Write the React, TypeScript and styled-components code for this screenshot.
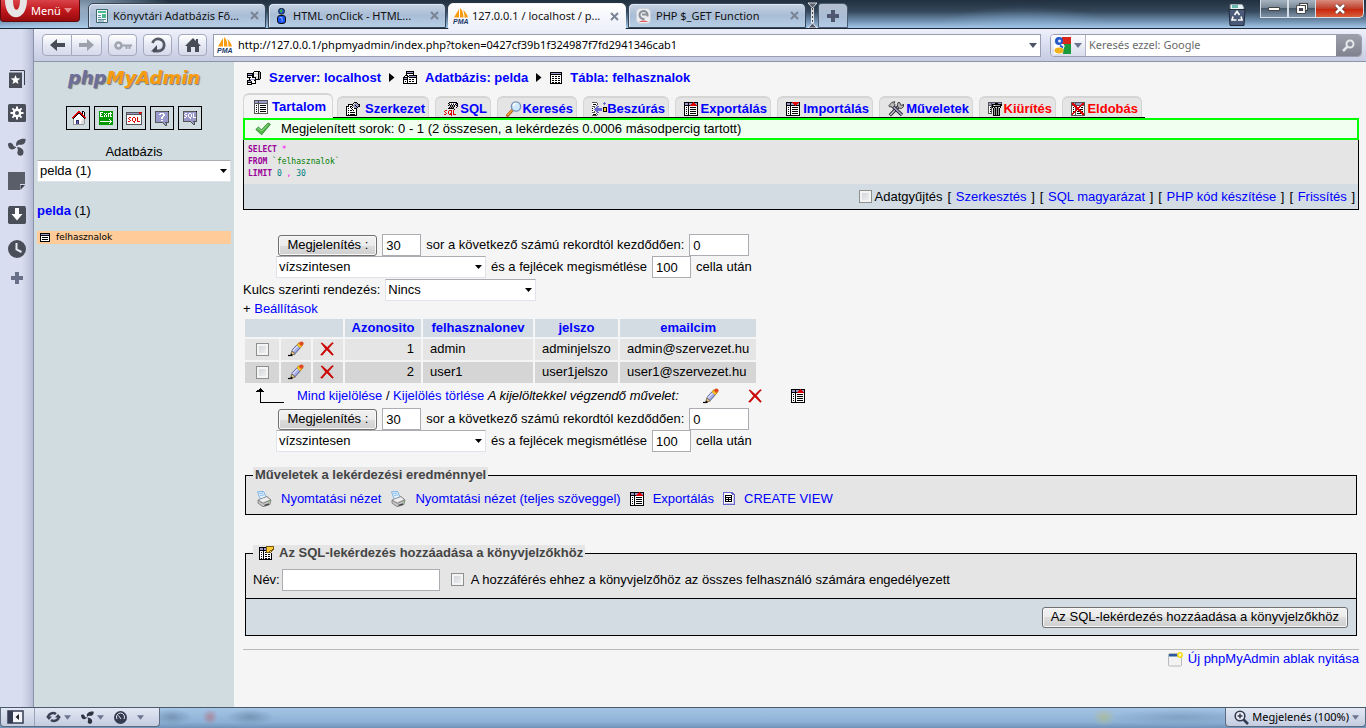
import React from "react";
import styled, { createGlobalStyle, css } from "styled-components";

const sans = '"Liberation Sans", Arial, sans-serif';
const ui = '"Noto Sans", "Segoe UI", sans-serif';
const arrowDown =
  "url(\"data:image/svg+xml,%3Csvg xmlns='http://www.w3.org/2000/svg' width='7' height='4'%3E%3Cpath d='M0 0h7L3.5 4z' fill='%23000'/%3E%3C/svg%3E\")";

const GlobalStyle = createGlobalStyle`
  *, *::before, *::after { box-sizing: border-box; }
  body { margin: 0; background: #f5f5f5; color: #000; font: 13px/16px ${sans}; }
  svg { display: block; flex: none; }
  a { color: #00f; text-decoration: none; }
  button, input, select { font: inherit; color: inherit; margin: 0; }
`;

/* ---------- icons ---------- */

const palette: Record<string, string> = {
  k: "#000", w: "#fff", b: "#9999cc", g: "#999", G: "#555", r: "#d00", l: "#ddd",
  y: "#fc3", o: "#f90", n: "#009900", d: "#336", s: "#c8c8e8", p: "#6666cc", q: "#e04040", u: "#7a5a10",
};

function Pixels({ rows, size }: { rows: string[]; size?: number }) {
  const w = Math.max(...rows.map((r) => r.length));
  const h = rows.length;
  const rects: React.ReactNode[] = [];
  rows.forEach((row, y) => {
    let x = 0;
    while (x < row.length) {
      const c = row[x];
      let end = x + 1;
      while (end < row.length && row[end] === c) end++;
      if (palette[c]) rects.push(<rect key={`${x}-${y}`} x={x} y={y} width={end - x} height={1} fill={palette[c]} />);
      x = end;
    }
  });
  return (
    <svg width={size ?? w} height={size ?? h} viewBox={`0 0 ${w} ${h}`} shapeRendering="crispEdges" aria-hidden="true">
      {rects}
    </svg>
  );
}

const art = {
  browse: [
    "GGGGGGGGGGGGGG", "GbbbGbbbbbbbbG", "GbbbGbbbbbbbbG", "GGGGGGGGGGGGGG", "GwwwGwwwwwwwwG", "GwkwGwkkkkkkwG", "GwwwGwwwwwwwwG",
    "GwkwGwkkkkkkwG", "GwwwGwwwwwwwwG", "GwkwGwkkkkkkwG", "GwwwGwwwwwwwwG", "GwkwGwkkkkkkwG", "GwwwGwwwwwwwwG", "GGGGGGGGGGGGGG",
  ],
  props: [
    "........kkk...", ".......kwgbk..", "..kkkkkwgbbbkk", "..kwwwkgbkbbbk", "kkkwkkwbbbkbkk", "kwwwkwkwbbbk..", "kwkwwkwwkkk...",
    "kwwwwwkwwwk...", "kwkwkkwkwwk...", "kwwwwwwwwwk...", "kwkwkkkkkwk...", "kwwwwwwwwwk...", "kwkwkkkkkwk...", "kkkkkkkkkkk...",
  ],
  sql: [
    ".....kkkkkkkk..", "....kgwgwgwbkk.", ".....kwkwkwkbk.", "....kgkgkgk.kk.", "......kgkgk..k.", ".....kgkgk..k..", "....kkkkkk.....",
    "..........k....", ".rr..rrr.r.....", "r...r..r.r.....", ".r..r..r.r.....", "..r.r.rr.r.....", "rr...rrr.rrr...", ".......r.......",
  ],
  export: [
    "kkkkkkkkkrkkkk", "kbbbkbbbrrrbbk", "kbbbkbbrrrrrbk", "kkkkkkrrrrrrrk", "kwwwkwwwwwwwwk", "kwkwkwkkkkkkwk", "kwwwkwwwwwwwwk",
    "kwkwkwkkkkkkwk", "kwwwkwwwwwwwwk", "kwkwkwkkkkkkwk", "kwwwkwwwwwwwwk", "kwkwkwkkkkkkwk", "kwwwkwwwwwwwwk", "kkkkkkkkkkkkkk",
  ],
  import: [
    "kkkkkkrrrrrrrk", "kbbbkbbrrrrrbk", "kbbbkbbbrrrbbk", "kkkkkkkkkrkkkk", "kwwwkwwwwwwwwk", "kwkwkwkkkkkkwk", "kwwwkwwwwwwwwk",
    "kwkwkwkkkkkkwk", "kwwwkwwwwwwwwk", "kwkwkwkkkkkkwk", "kwwwkwwwwwwwwk", "kwkwkwkkkkkkwk", "kwwwkwwwwwwwwk", "kkkkkkkkkkkkkk",
  ],
  insert: [
    "GGGGG.......p..", "wwwwwG.....ppp.", "wkkkwG......p..", "wwwwG..........", "GGG..pp........", "wwG.pp.....kkkk", "kw.ppppppp.kyyk",
    "w.pppppppp.kyyk", "kw.ppppppp.kyyk", "wwG.pp.....kkkk", "GGG..pp........", "wwwwG..........", "wkkkwG.........", "GGGGG..........",
  ],
  empty: [
    "GGGGGGGGGGGGGG", "GbbGbbbkkkbbbG", "GbbGkkkkkkkkkk", "GGGGkgwgggggkk", "GwwGkkkkkkkkk.", "GwkGk.kg.kg.k.", "GwwG.kgkgkgk..",
    "GwkG.kgkgkgk..", "GwwG.kgkgkgk..", "GwkG.kgkgkgk..", "GwwG.kgkgkgk..", "GGGG.kgkgkgk..", ".....kgkgkgk..", ".....kkkkkkk..",
  ],
  remove: [
    "GGGGGGGGGGGGGG", "GrrbGbbbbbbrrG", "GrrrGbbbbbrrrG", "GGrrrGGGGrrGGG", "GwwrrrwwrrwwwG", "GwkwrrrrrwkkwG", "GwwwGrrrwwwwwG",
    "GwkwGrrrrkkkwG", "GwwwrrwrrrwwwG", "GwkrrwkkrrrkwG", "GwrrGwwwwrrrwG", "GrrwGwkkkkrrrG", "GrwwGwwwwwwrrG", "GGGGGGGGGGGGGG",
  ],
  table: [
    "kkkkkkkkkkkk", "kbbbbbbbbbbk", "kkkkkkkkkkkk", "kwwwwwwwwwwk", "kwkkwkkwkkwk", "kwwwwwwwwwwk", "kwkkwkkwkkwk", "kwwwwwwwwwwk",
    "kwkkwkkwkkwk", "kwwwwwwwwwwk", "kwkkwkkwkkwk", "kkkkkkkkkkkk",
  ],
  database: [
    "...kkkkkkkk...", "...kbbbbbbk...", "...kkkkkkkk...", "...kwwwwwwk...", "..kkkwkkkkkkkk", ".kwwkkbbbbbbbk", "kkkkkwkkkkkkkk",
    "kbbbkwwwwwwwwk", "kkkkkwkkwkkwwk", "kwwwkwwwwwwwwk", "kwkwkwkkwkkwwk", "kwwwkwwwwwwwwk", "kkkkkkkkkkkkkk",
  ],
  server: [
    ".......kkkkkk.", "......kwwwwkgk", "kkkkkkkllllkgk", "kbbbbkkllllkgk", "kkkkkkkwwwwkgk", "kwwwwkkllllkgk", "kkkkwkkkkllkgk",
    "..kwwwwwkllkgk", "..kbbbbbkkkkk.", "kkkkwwwkk.....", "kbbbkwwwk.....", "kkkkkwwwk.....", "kwwwkkkkk.....", "kkkkk.........",
  ],
  smallTable: [
    "kkkkkkkkkk", "kbbbbbbbbk", "kkkkkkkkkk", "kwwwwwwwwk", "kwkkkkkkwk", "kwwwwwwwwk", "kwkkkkkkwk", "kwwwwwwwwk", "kkkkkkkkkk",
  ],
  bookmark: [
    ".......uuuuuuuu", "kkkkkkkuyyyyyyu", "kbbbkbbuyyyyyyu", "kbbbkbbuyyyyyuu", "kkkkkkkuyyyuuu.", "kwwwkwwuyyuyu..", "kwkwkwkuuuuu...",
    "kwwwkwwwwwwwk..", "kwkwkwkkwkkwk..", "kwwwkwwwwwwwk..", "kwkwkwkkwkkwk..", "kwwwkwwwwwwwk..", "kwkwkwkkwkkwk..", "kkkkkkkkkkkkk..",
  ],
  view: [
    "pppppppppp..", "pwwwwwwwppp.", "pwwwwwwwwppp", "pwkkkkkkkwwp", "pwkwwwwwkwsp", "pwkkkkkkkwsp", "pwkwwkwwkwsp", "pwkkkkkkkwsp",
    "pwkwwkwwkwsp", "pwkkkkkkkwsp", "pwwwwwwwwwsp", "pwsssssssssp", "pppppppppppp",
  ],
  home: [
    ".......rr..kk..", "......rrrr.kwk.", ".....rrkkrrkwk.", "....rrkwwkrrwk.", "...rrkwwwwkrrk.", "..rrkwwwwwwkrr.", ".rrkwwwwwwwwkrr",
    ".gkwwwwwwwwwwkg", "..gwwwwwwwwllg.", "..gwwdddwwwllg.", "..gwwdpdwwlllg.", "..gwwdpdwwlllg.", "..gwwdpdwwlllg.", "..ggggggggggg..",
  ],
  exit: [
    "nnnnnnnnnnnnnn", "nwwwnnnnnnnwnn", "nwnnnwnwnwwwwn", "nwwnnnwnnwnwnn", "nwnnnwnwnwnwnn", "nwwwnwnwnwnwwn", "nnnnnnnnnnnnnn",
    "nnnnnnnnnnnnnn", "nnnnnnnnnnwnnn", "nnnnnnnnnnnwnn", "nwwwwwwwwwwwwn", "nnnnnnnnnnnwnn", "nnnnnnnnnnwnnn", "nnnnnnnnnnnnnn",
  ],
  sqlWindow: [
    "GGGGGGGGGGGGGrrr", "GbbbbbbbbbbbbrrG", "GGGGGGGGGGGGGGGG", "GwwwwwwwwwwwwwwG", "GwwwwwwwwwwwwwwG", "GwwrrwwrrwwrwwwG", "GwrwwwrwwrwrwwwG",
    "GwwrwwrwwrwrwwwG", "GwwwrwrwwrwrwwwG", "GwrrwwwrrwwrrrwG", "GwwwwwwwrwwwwwwG", "GwwwwwwwwwwwwwwG", "GGGGGGGGGGGGGGGG",
  ],
  help: [
    "GGGGGGGGGGGGGk", "GbbbbbbbbbbbbG", "GbbbbwwwwbbbbG", "GbbbwwbbwwbbbG", "GbbbbbbbwwbbbG", "GbbbbbbwwbbbbG", "GbbbbbwwbbbbbG",
    "GbbbbbwwbbbbbG", "GbbbbbbbbbbbbG", "GbbbbbwwbbbbbG", "GbbbbbbbbbbbbG", "GGGGGGGGbbGGGG", "........GbbG..", ".........GbG..", "..........GG..",
  ],
  sqlHelp: [
    "GGGGGGGGGGGGGk", "GbbbbbbbbbbbbG", "GbwwbbwwbbwbbG", "GwbbbwbbwbwbbG", "GbwwbwbbwbwbbG", "GbbwbwbbwbwbbG", "GwwbbbwwbbwwwG",
    "GbbbbbbwbbbbbG", "GbbbbbbbbbbbbG", "GbbbbbbbbbbbbG", "GGGGGGGGbbGGGG", "........GbbG..", ".........GbG..", "..........GG..",
  ],
};

const Pencil = () => (
  <svg width="16" height="16" viewBox="0 0 16 16" aria-hidden="true">
    <path d="M0 14.500h4.500" stroke="#000" strokeWidth="1.200" />
    <path d="M5.500 11L10.500 5.500" stroke="#4a528c" strokeWidth="5.200" />
    <path d="M5.500 11L10.500 5.500" stroke="#a8aee6" strokeWidth="3.800" />
    <path d="M4.800 10l5-5.400" stroke="#dfe2ff" strokeWidth="1.200" />
    <path d="M10.500 5.500l2.200-2.400" stroke="#b08400" strokeWidth="5.200" />
    <path d="M10.600 5.400l2-2.200" stroke="#fcc82c" strokeWidth="3.800" />
    <circle cx="13.400" cy="2.600" r="2.200" fill="#e04a20" />
    <path d="M2.600 14.300l1.200-4.400 3.500 3.100z" fill="#e8c070" stroke="#333" strokeWidth=".6" />
    <path d="M2.500 14.500l.6-2 1.500 1.300z" fill="#000" />
  </svg>
);

const Cross = () => (
  <svg width="14" height="14" viewBox="0 0 14 14" aria-hidden="true">
    <path d="M1 1l1.500.3 4.700 4.300L12 .7l1.300.3-5 5.600 5 6-1 .6-5.500-5.400-4.600 5.400-1.500-.4L5.700 6.900z" fill="#d40000" stroke="#c00000" strokeWidth=".7" />
  </svg>
);

const Check = () => (
  <svg width="16" height="14" viewBox="0 0 16 14" aria-hidden="true">
    <path d="M.8 7.500L3.400 5l3 2.800L13 1l2.400 1.200L6.700 12.800z" fill="#4db648" stroke="#2b7d2b" strokeWidth=".8" />
    <path d="M2.400 7.200l1.200-1 2.900 2.900 6.700-6.800" fill="none" stroke="#9be08e" strokeWidth="1" />
  </svg>
);

const Magnifier = () => (
  <svg width="16" height="16" viewBox="0 0 16 16" aria-hidden="true">
    <path d="M1.500 14.500l5.500-6" stroke="#b5651d" strokeWidth="3" strokeLinecap="round" />
    <path d="M1.800 13.800l4.800-5.200" stroke="#f5a742" strokeWidth="1.300" strokeLinecap="round" />
    <circle cx="10" cy="5.500" r="4.600" fill="#cfe8fb" stroke="#7492b5" strokeWidth="1.400" />
    <path d="M7.500 5a2.700 2.700 0 0 1 2.700-2.500" stroke="#fff" strokeWidth="1.400" fill="none" />
  </svg>
);

const Tools = () => (
  <svg width="16" height="16" viewBox="0 0 16 16" aria-hidden="true">
    <path d="M1.800 14.300L11 5" stroke="#222" strokeWidth="3.200" />
    <path d="M2.200 13.900L11 5" stroke="#c8c8e0" strokeWidth="1.400" />
    <path d="M10 1.500l2 .3.500 2.200 2.200.4.600-1.400.3 2.600-2.400 2-3-.8-.8-3z" fill="#bbb" stroke="#222" strokeWidth=".8" />
    <path d="M4.500 5l9.500 9" stroke="#222" strokeWidth="3.200" />
    <path d="M5.500 6l8.500 8" stroke="#aaaadd" strokeWidth="1.600" />
    <path d="M.8 4.800L4 1.200l3-.4L6 2.500 7.300 4 4.600 6.800 3 5.500 1.800 6z" fill="#bbb" stroke="#222" strokeWidth=".8" />
  </svg>
);

const Printer = () => (
  <svg width="16" height="16" viewBox="0 0 16 16" aria-hidden="true">
    <path d="M1.500 .8l6-.4 2.800 6-6 2z" fill="#dff0ff" stroke="#6aa5dc" strokeWidth=".8" />
    <path d="M3 2.500l4-.4M4 4.500l4-.6" stroke="#8fc0ee" strokeWidth="1" />
    <path d="M2 9l9-3.500 4 3.500-1 4.500-7 2.200-5-3.500z" fill="#c4c4c4" stroke="#777" strokeWidth=".8" />
    <path d="M3 9l7.500-2.800 3 2.300-6.300 2.700z" fill="#eee" />
    <path d="M2.200 9.300l5 3 7.500-3.200" fill="none" stroke="#777" strokeWidth=".8" />
    <path d="M8.500 13.800l4.500-1.600v1.600l-4.500 1.500z" fill="#444" />
    <circle cx="13.300" cy="10.600" r=".7" fill="#6c3" />
  </svg>
);

const NewWindow = () => (
  <svg width="15" height="15" viewBox="0 0 15 15" aria-hidden="true">
    <rect x=".5" y="1.500" width="13" height="12.500" rx="1" fill="#f3f3f3" stroke="#bbb" />
    <rect x="1" y="2" width="9" height="2.500" fill="#2c5a9c" />
    <circle cx="12" cy="3" r="2.200" fill="#fff8c0" stroke="#f4dc14" strokeWidth="1.500" />
  </svg>
);

const WithSelected = () => (
  <svg width="30" height="16" viewBox="0 0 30 16" shapeRendering="crispEdges" aria-hidden="true">
    <path d="M5.500 3v11.500H29" fill="none" stroke="#000" />
    <path d="M5 0h1v1h1v1h1v1h1v1H1V3h1V2h2V1h1z" fill="#000" />
  </svg>
);

const PmaFavicon = () => (
  <svg width="16" height="16" viewBox="0 0 16 16" aria-hidden="true">
    <path d="M1 9.500L6 1v8.500zM7 9.500V0c2.500 2 3.500 6 3.500 9.500zM11.500 9.500C11.500 6 11 4 10 2c2.500 1.500 4.500 5 5 7.500z" fill="#f89c0e" />
    <text x="0" y="15.500" fontFamily="Liberation Sans, sans-serif" fontSize="7" fontWeight="bold" fontStyle="italic" fill="#223a6e">PMA</text>
  </svg>
);

const DocFavicon = () => (
  <svg width="12" height="16" viewBox="0 0 12 16" aria-hidden="true">
    <path d="M.5 1.500h11v13H.5z" fill="#f3f7f8" stroke="#3d6670" />
    <path d="M2 3h8v2H2zM6 6h4v4H6z" fill="#4bb98f" />
    <path d="M2 7.500h3M2 9.500h3M2 11.500h8M2 13h6" stroke="#5b8fa3" />
  </svg>
);

const ManFavicon = () => (
  <svg width="12" height="16" viewBox="0 0 12 16" aria-hidden="true">
    <circle cx="5.500" cy="3.300" r="3" fill="#2450c8" stroke="#111" strokeWidth=".8" />
    <path d="M3.500 2.500l2-1.500 1 2-1.500 2z" fill="#38b048" />
    <rect x="1.500" y="7.500" width="8" height="8" rx="2.500" fill="#1850f0" stroke="#111" />
    <path d="M3.500 9.500h2.500v4" stroke="#8fb2ff" fill="none" />
  </svg>
);

const PhpFavicon = () => (
  <svg width="15" height="16" viewBox="0 0 15 16" aria-hidden="true">
    <rect x=".5" y=".5" width="14" height="15" rx="4" fill="#eceef2" stroke="#c9ced8" />
    <path d="M11.500 6.500a4 4 0 1 0-3 4.300M6 6.500h5.500v2" stroke="#8b8f99" strokeWidth="2" fill="none" />
    <path d="M3 14c2-2 7-2 9 0z" fill="#e05a5a" />
  </svg>
);

const Triangle = ({ color = "#6b7390", width = 8 }: { color?: string; width?: number }) => (
  <svg width={width} height="5" viewBox="0 0 8 5" aria-hidden="true"><path d="M0 0h8L4 5z" fill={color} /></svg>
);

const fanPath =
  "M9 8.500C7 4 12 0 18.500 1c.5 6-4 6.500-6.500 6-1.500 0-2 .5-2 1.500zM8.500 10C5 14 0 12 0 6c1.500-2 5-1 5.500 1.500.3 1.500 1.500 2 3 1.500zM10 9.500c5 .5 8 4 5.500 8.500-3 2-6.500 0-5.500-3.500.4-1.500 1-3-.5-4z";

const railIcons = [
  <svg key="star" width="16" height="18" viewBox="0 0 16 18"><path d="M0 2.500h13V18H0z" fill="#4a4e58" /><path d="M1 .5h14.500V15" fill="none" stroke="#3c404a" /><path d="M6.500 5l1.300 3.300 3.500.2-2.700 2.200.9 3.400-3-1.900-3 1.900.9-3.400-2.700-2.200 3.500-.2z" fill="#fff" /></svg>,
  <svg key="gear" width="18" height="18" viewBox="0 0 18 18"><rect width="18" height="18" rx="1.500" fill="#4a4e58" /><circle cx="9" cy="9" r="3.200" fill="none" stroke="#fff" strokeWidth="2.400" /><path d="M9 2.500v3M9 12.500v3M2.500 9h3M12.500 9h3M4.400 4.400l2 2M11.600 11.600l2 2M13.600 4.400l-2 2M6.400 11.600l-2 2" stroke="#fff" strokeWidth="2" /></svg>,
  <svg key="fan" width="18" height="18" viewBox="0 0 19 19"><path d={fanPath} fill="#4a4e58" /></svg>,
  <svg key="note" width="17" height="18" viewBox="0 0 17 18"><path d="M0 0h17v12h-5v6H0z" fill="#5a5e69" /><path d="M12.500 18v-5H17z" fill="#3c404a" /></svg>,
  <svg key="down" width="18" height="18" viewBox="0 0 18 18"><path d="M1 0h16l1 2v14.500L17 18H1l-1-1.500V2z" fill="#4a4e58" /><path d="M7 2h4v6h3.500L9 14.500 3.500 8H7z" fill="#fff" /></svg>,
  <svg key="clock" width="18" height="18" viewBox="0 0 18 18"><circle cx="9" cy="9" r="9" fill="#4a4e58" /><path d="M8.500 3v6.500l5 2.500" stroke="#e8eaf2" strokeWidth="2" fill="none" /></svg>,
  <svg key="plus" width="12" height="12" viewBox="0 0 12 12"><path d="M4 0h4v4h4v4H8v4H4V8H0V4h4z" fill="#687089" /></svg>,
];
const railLabels = ["Könyvjelzők", "Eszközök", "Unite", "Jegyzetek", "Letöltések", "Előzmények", "Panel hozzáadása"];

/* ---------- browser frame ---------- */

const Window = styled.div`
  min-height: 100vh;
  display: flex;
  flex-direction: column;
`;

const TabStrip = styled.header`
  height: 29px;
  display: flex;
  align-items: flex-start;
  border-bottom: 1px solid #1c2836;
  font: 11px/16px ${ui};
  background:
    radial-gradient(ellipse 90px 40px at 82px 10px, rgba(190, 215, 240, 0.7), transparent),
    radial-gradient(ellipse 90px 22px at 75% 28px, rgba(150, 190, 230, 0.5), transparent),
    linear-gradient(180deg, #22303f 0%, #34475a 40%, #6f8fae 75%, #a5c8ea 100%);
`;

const OperaMenu = styled.button`
  width: 80px;
  height: 22px;
  display: flex;
  align-items: center;
  justify-content: space-between;
  padding: 0 7px 0 4px;
  border: 1px solid #5c0a0c;
  border-top: 0;
  border-radius: 0 0 4px 4px;
  background: linear-gradient(#d9434a, #c0181c 50%, #960a0d);
  color: #fff;
  font: 11px/16px ${ui};
  svg:first-child { align-self: flex-start; }
`;

const BrowserTabs = styled.nav`
  display: flex;
  gap: 2px;
  margin-left: 8px;
  padding-top: 3px;
`;

const BrowserTab = styled.div<{ $active?: boolean }>`
  width: 178px;
  height: 25px;
  display: flex;
  align-items: center;
  gap: 5px;
  padding: 0 6px 0 7px;
  border: 1px solid #35465a;
  border-radius: 5px 5px 0 0;
  background: linear-gradient(#c6d2e2, #a9bdd6 50%, #b7cde6);
  box-shadow: inset 1px 1px rgba(255, 255, 255, 0.5);
  a { flex: 1; color: #111; white-space: nowrap; }
  ${(p) => p.$active && css`
    height: 26px;
    padding-left: 4px;
    gap: 3px;
    border-color: #f2f4fb;
    background: linear-gradient(#fff, #eef0fa);
  `}
`;

const CloseTab = styled.button`
  padding: 0;
  border: 0;
  background: none;
`;

const NewTab = styled.button`
  width: 30px;
  height: 25px;
  margin-top: 3px;
  padding: 0;
  display: grid;
  place-items: center;
  border: 1px solid #4b5c70;
  border-radius: 3px 5px 0 0;
  background: linear-gradient(#b4bfcd, #a9bdd6 60%, #b4cce8);
`;

const WindowButtons = styled.div`
  display: flex;
  align-items: flex-start;
  margin-left: auto;
  padding-right: 2px;
`;

const Bin = styled.span`
  padding: 4px 14px 0 0;
`;

const WinButton = styled.button<{ $close?: boolean }>`
  width: ${(p) => (p.$close ? 48 : 28)}px;
  height: 18px;
  display: grid;
  place-items: center;
  padding: 0;
  border: 1px solid #d5dde6;
  border-top: 0;
  border-left-width: ${(p) => (p.$close ? 0 : 1)}px;
  border-radius: ${(p) => (p.$close ? "0 0 5px 0" : "0")};
  background: ${(p) => (p.$close ? "linear-gradient(#d98c80, #c0402c 50%, #c8260c 55%, #d8603c)" : "linear-gradient(#a7b3c0, #7a8998 45%, #475868 50%, #7f93a8)")};
`;

const Middle = styled.div`
  flex: 1;
  display: flex;
`;

const Rail = styled.aside`
  width: 34px;
  display: flex;
  flex-direction: column;
  align-items: center;
  gap: 16px;
  padding-top: 41px;
  border-right: 1px solid #8d93a9;
  background: linear-gradient(90deg, #d8ddef 65%, #c8cde2 85%, #b4bad2);
`;

const RailButton = styled.button`
  padding: 0;
  border: 0;
  background: none;
  &:last-child { margin-top: -2px; }
`;

const Column = styled.div`
  flex: 1;
  min-width: 0;
  display: flex;
  flex-direction: column;
`;

const Toolbar = styled.div`
  height: 33px;
  display: flex;
  align-items: center;
  gap: 6px;
  padding: 0 4px 0 8px;
  border-bottom: 1px solid #8d93a9;
  background: linear-gradient(#eff0fa, #d9ddef 50%, #c6cce2);
  font: 11px/16px ${ui};
`;

const ToolGroup = styled.div`
  display: flex;
`;

const ToolButton = styled.button`
  width: 29px;
  height: 22px;
  display: grid;
  place-items: center;
  padding: 0;
  border: 1px solid #a4a9bd;
  border-radius: 4px;
  background: linear-gradient(#fff, #e6e9f4 50%, #d5d9ea);
  ${ToolGroup} > & { width: 30px; }
  ${ToolGroup} > &:first-child { border-radius: 4px 0 0 4px; }
  ${ToolGroup} > & + & { border-left: 0; border-radius: 0 4px 4px 0; }
`;

const AddressBox = styled.label`
  flex: 1;
  height: 23px;
  display: flex;
  align-items: center;
  gap: 5px;
  padding: 0 3px;
  border: 1px solid #9a9eb0;
  background: #fff;
`;

const BareInput = styled.input`
  flex: 1;
  min-width: 0;
  padding: 0;
  border: 0;
  outline: 0;
  background: none;
  &::placeholder { color: #6a6a6a; opacity: 1; }
`;

const SearchBox = styled.div`
  width: 312px;
  height: 23px;
  display: flex;
  margin-left: 3px;
  border: 1px solid #9a9eb0;
  border-radius: 4px;
  background: #fff;
  overflow: hidden;
`;

const EngineButton = styled.button`
  width: 35px;
  display: flex;
  align-items: center;
  justify-content: space-between;
  margin-right: 3px;
  padding: 0 3px;
  border: 0;
  border-right: 1px solid #b2b6c8;
  background: linear-gradient(#fdfdff, #d9dded);
`;

const SearchGo = styled.button`
  width: 25px;
  display: grid;
  place-items: center;
  padding: 0;
  border: 0;
  background: linear-gradient(#9c9faa, #80838f);
`;

const StatusBar = styled.footer`
  height: 21px;
  display: flex;
  justify-content: space-between;
  border-top: 1px solid #4a5a6c;
  background:
    radial-gradient(ellipse 20px 8px at 172px 9px, rgba(70, 95, 125, 0.4), transparent),
    radial-gradient(ellipse 8px 8px at 210px 9px, rgba(190, 90, 100, 0.5), transparent),
    radial-gradient(ellipse 24px 8px at 250px 9px, rgba(70, 95, 125, 0.4), transparent),
    radial-gradient(ellipse 12px 9px at calc(100% - 262px) 9px, rgba(190, 190, 110, 0.5), transparent),
    radial-gradient(ellipse 70px 8px at calc(100% - 185px) 9px, rgba(70, 95, 125, 0.25), transparent),
    linear-gradient(#a4c4e4, #8db2d6 70%, #6f93b8);
  font: 11px/16px ${ui};
`;

const StatusPanel = styled.div<{ $end?: boolean }>`
  height: 19px;
  display: flex;
  align-items: center;
  border: 1px solid #5e6b7e;
  border-top: 0;
  border-radius: 0 0 4px 4px;
  background: linear-gradient(#e2e7f3, #c3cce0);
  ${(p) => (p.$end ? css`padding: 0 6px 0 8px;` : css`width: 160px; padding-left: 6px;`)}
`;

const StatusButton = styled.button`
  display: flex;
  align-items: center;
  gap: 3px;
  padding: 0;
  border: 0;
  background: none;
`;

const StatusGroup = styled.div`
  display: flex;
  align-items: center;
  gap: 10px;
  height: 100%;
  margin-left: 10px;
  padding-left: 11px;
  border-left: 1px solid #9aa3b8;
`;

/* ---------- phpMyAdmin ---------- */

const Page = styled.div`
  flex: 1;
  display: flex;
`;

const Sidebar = styled.aside`
  width: 200px;
  padding: 3px 3px 0;
  background: #d0dce0;
`;

const Logo = styled.h1`
  margin: 0;
  text-align: center;
  font: italic bold 18px/26px "DejaVu Sans", Verdana, sans-serif;
  color: #6c6f9c;
  text-shadow: 1px 1px 1px #777;
  span { color: #f89c0e; }
`;

const NavButtons = styled.nav`
  display: flex;
  justify-content: center;
  gap: 4px;
  margin: 15px 0 14px;
  a {
    width: 24px;
    height: 24px;
    display: grid;
    place-items: center;
    border: 1px solid #000;
  }
`;

const DbLabel = styled.label`
  display: block;
  text-align: center;
`;

const Select = styled.select<{ $w?: string }>`
  width: ${(p) => p.$w ?? "100%"};
  height: 22px;
  padding: 0 2px;
  border: 1px solid #e2e3ea;
  border-top-color: #abadb3;
  border-radius: 0;
  appearance: none;
  background: #fff ${arrowDown} no-repeat right 3px center;
`;

const DbName = styled.p`
  margin: 21px 0 12px;
`;

const TableLink = styled.a`
  display: flex;
  align-items: center;
  gap: 6px;
  height: 13px;
  padding-left: 3px;
  background: #fc9;
  color: #000;
  font: 9px/13px "DejaVu Sans", Verdana, sans-serif;
`;

const Main = styled.main`
  flex: 1;
  min-width: 0;
  padding: 0 7px 40px 9px;
`;

const Crumbs = styled.nav`
  height: 31px;
  display: flex;
  align-items: center;
  gap: 8px;
  padding-left: 4px;
  font-weight: bold;
  a { display: flex; align-items: center; gap: 8px; }
`;

const Tabs = styled.nav`
  width: max-content;
  display: flex;
  align-items: flex-end;
  gap: 6px;
  height: 25px;
  padding-right: 3px;
  border-bottom: 1px solid #000;
`;

const Tab = styled.a<{ $width: number; $active?: boolean; $danger?: boolean }>`
  min-width: ${(p) => p.$width}px;
  height: 21px;
  display: flex;
  align-items: center;
  justify-content: space-between;
  padding: 2px 3px 0 8px;
  border: 1px solid #d5d5d5;
  border-top-width: 2px;
  border-bottom: 0;
  border-radius: 6px 6px 0 0;
  background: #e5e5e5;
  color: ${(p) => (p.$danger ? "#f00" : "#00f")};
  font-weight: bold;
  ${(p) => p.$active && css`
    height: 25px;
    margin: 0 -2px -1px 0;
    padding: 0 6px 0 10px;
    background: #f5f5f5;
  `}
`;

const Success = styled.div`
  height: 22px;
  display: flex;
  align-items: center;
  gap: 10px;
  padding-left: 10px;
  border: 2px solid #0f0;
  background: #f0fff0;
`;

const QueryBox = styled.section`
  border: 1px solid #000;
  border-top: 0;
`;

const Code = styled.pre`
  height: 44px;
  margin: 0;
  padding: 4px 4px 0;
  background: #e5e5e5;
  font: 8px/12px "DejaVu Sans Mono", monospace;
  b { color: #909; }
  i { color: #f0f; font-style: normal; }
  q { color: #008000; quotes: none; }
  span { color: #008080; }
`;

const QueryTools = styled.div`
  height: 25px;
  display: flex;
  align-items: center;
  justify-content: flex-end;
  gap: 5px;
  padding-right: 3px;
  background: #d3dce3;
  a { margin: 0 1px; }
`;

const CheckLabel = styled.label<{ $gap?: number }>`
  display: flex;
  align-items: center;
  gap: ${(p) => p.$gap ?? 3}px;
`;

const Checkbox = styled.input.attrs({ type: "checkbox" })`
  flex: none;
  width: 13px;
  height: 13px;
  appearance: none;
  border: 1px solid #8e8f8f;
  background: linear-gradient(135deg, #cbcfd5, #f6f6f6);
  box-shadow: inset 0 0 0 2px #f4f4f4;
`;

const DisplayForm = styled.form`
  width: max-content;
  display: flex;
  flex-direction: column;
  align-items: center;
  margin-left: 33px;
  ${QueryBox} + & { margin-top: 24px; }
`;

const Row = styled.div`
  display: flex;
  align-items: center;
  gap: 5px;
  height: 22px;
`;

const Button = styled.button`
  height: 21px;
  padding: 0 8px;
  border: 1px solid #707070;
  border-radius: 3px;
  background: linear-gradient(#f2f2f2, #ebebeb 50%, #ddd 50%, #cfcfcf);
  box-shadow: inset 0 0 0 1px #f8f8f8;
`;

const TextBox = styled.input<{ $w: number }>`
  width: ${(p) => p.$w}px;
  height: 22px;
  padding: 0 3px;
  border: 1px solid #abadb3;
  background: #fff;
`;

const SortRow = styled(Row)`
  margin-top: 1px;
`;

const Results = styled.table`
  border-spacing: 2px;
  th { height: 18px; padding: 0; background: #d3dce3; }
  td { height: 21px; padding: 0 7px 2px; background: #e5e5e5; }
  tbody tr:nth-child(2) td { background: #d5d5d5; }
  td:first-child { padding: 0 10px 0 11px; }
  input { display: block; }
`;

const Col = styled.col<{ $w: number }>`
  width: ${(p) => p.$w}px;
`;

const NumberCell = styled.td`
  text-align: right;
`;

const SelectionRow = styled.div`
  height: 23px;
  display: flex;
  align-items: center;
  gap: 12px;
  padding: 0 0 2px 12px;
`;

const SelectionIcons = styled.div`
  display: flex;
  align-items: center;
  gap: 29px;
  margin-left: 12px;
`;

const Group = styled.fieldset<{ $open?: boolean }>`
  min-width: 0;
  margin: ${(p) => (p.$open ? "30px 2px 0" : "15px 2px 0")};
  padding: 0 7px;
  border: 1px solid #000;
  background: #e5e5e5;
`;

const Legend = styled.legend`
  height: 16px;
  display: flex;
  align-items: center;
  gap: 5px;
  padding: 0 2px;
  background: #e5e5e5;
  color: #444;
  font-weight: bold;
  svg { margin-left: 4px; }
`;

const GroupRow = styled.div<{ $tall?: boolean }>`
  height: ${(p) => (p.$tall ? 37 : 31)}px;
  display: flex;
  align-items: center;
  gap: 9px;
`;

const IconLink = styled.a`
  display: flex;
  align-items: center;
  gap: 9px;
  &:first-child { margin-left: 3px; }
`;

const NameLabel = styled.label`
  display: flex;
  align-items: center;
  gap: 2px;
  margin-right: 2px;
`;

const GroupFooter = styled.div`
  height: 37px;
  display: flex;
  align-items: center;
  justify-content: flex-end;
  margin: 0 2px;
  padding-right: 8px;
  border: 1px solid #000;
  border-top: 0;
  background: #d3dce3;
`;

const PageFooter = styled.footer`
  display: flex;
  justify-content: flex-end;
  margin-top: 13px;
  padding-top: 1px;
  border-top: 1px solid #bbb;
  a { display: flex; align-items: center; gap: 5px; }
`;

const CloseX = () => (
  <svg width="9" height="9" viewBox="0 0 9 9"><path d="M1 1l7 7M8 1L1 8" stroke="#7b8494" strokeWidth="2" /></svg>
);

const browserTabs = [
  { icon: <DocFavicon />, title: "Könyvtári Adatbázis Fő..." },
  { icon: <ManFavicon />, title: "HTML onClick - HTML..." },
  { icon: <PmaFavicon />, title: "127.0.0.1 / localhost / p...", active: true },
  { icon: <PhpFavicon />, title: "PHP $_GET Function" },
];

const pmaTabs = [
  { icon: <Pixels rows={art.browse} />, label: "Tartalom", width: 90, active: true },
  { icon: <Pixels rows={art.props} />, label: "Szerkezet", width: 92 },
  { icon: <Pixels rows={art.sql} />, label: "SQL", width: 56 },
  { icon: <Magnifier />, label: "Keresés", width: 80 },
  { icon: <Pixels rows={art.insert} />, label: "Beszúrás", width: 86 },
  { icon: <Pixels rows={art.export} />, label: "Exportálás", width: 96 },
  { icon: <Pixels rows={art.import} />, label: "Importálás", width: 96 },
  { icon: <Tools />, label: "Műveletek", width: 94 },
  { icon: <Pixels rows={art.empty} />, label: "Kiürítés", width: 77, danger: true },
  { icon: <Pixels rows={art.remove} />, label: "Eldobás", width: 80, danger: true },
];

const users = [
  { id: 1, name: "admin", password: "adminjelszo", email: "admin@szervezet.hu" },
  { id: 2, name: "user1", password: "user1jelszo", email: "user1@szervezet.hu" },
];

const columnWidths = [34, 30, 30, 76, 110, 83, 135];

const CrumbArrow = () => (
  <svg width="6" height="9" viewBox="0 0 6 9" aria-hidden="true"><path d="M0 0l5.500 4.500L0 9z" /></svg>
);

function DisplayOptions({ id }: { id: string }) {
  return (
    <DisplayForm onSubmit={(e) => e.preventDefault()}>
      <Row>
        <Button type="submit">Megjelenítés :</Button>
        <TextBox $w={39} aria-label="Sorok száma" defaultValue="30" />
        <label htmlFor={`${id}-from`}>sor a következő számú rekordtól kezdődően:</label>
        <TextBox $w={60} id={`${id}-from`} defaultValue="0" />
      </Row>
      <Row>
        <Select $w="210px" aria-label="Megjelenítés módja"><option>vízszintesen</option></Select>
        <label htmlFor={`${id}-repeat`}>és a fejlécek megismétlése</label>
        <TextBox $w={39} id={`${id}-repeat`} defaultValue="100" />
        <span>cella után</span>
      </Row>
    </DisplayForm>
  );
}

export default function App() {
  return (
    <Window>
      <GlobalStyle />
      <TabStrip>
        <OperaMenu>
          <svg width="23" height="18" viewBox="0 0 23 18"><path d="M0 0c0 23 22 23 22 0h-7c0 13-7 13-7 0z" fill="#e6e4e4" /></svg>
          Menü
          <Triangle color="#e5898c" />
        </OperaMenu>
        <BrowserTabs>
          {browserTabs.map((t) => (
            <BrowserTab key={t.title} $active={t.active}>
              {t.icon}
              <a href="#tab">{t.title}</a>
              <CloseTab aria-label="Lap bezárása"><CloseX /></CloseTab>
            </BrowserTab>
          ))}
        </BrowserTabs>
        <svg width="12" height="28" viewBox="0 0 12 28">
          <path d="M2 3h9L6.500 8zM2 28h9L6.500 23z" fill="#555c6c" stroke="#fff" strokeWidth=".8" />
          <path d="M6.500 8v15" stroke="#fff" strokeWidth="3" opacity=".8" />
          <path d="M6.500 8v15" stroke="#444" strokeDasharray="2 2" />
        </svg>
        <NewTab aria-label="Új lap">
          <svg width="12" height="12" viewBox="0 0 12 12"><path d="M4 0h4v4h4v4H8v4H4V8H0V4h4z" fill="#4f586e" /></svg>
        </NewTab>
        <WindowButtons>
          <Bin>
            <svg width="18" height="22" viewBox="0 0 18 22">
              <path d="M2 0h12l2 3v5H2z" fill="#e9f2f4" stroke="#56656c" />
              <path d="M4 1h6v3H4z" fill="#6cb9b0" />
              <path d="M1 5.500h16l-1 16H2z" fill="#4b5a78" stroke="#222b3a" />
              <path d="M6.500 11L9 7.500l2.500 3.500M13 12.500l1 3.500h-4M5 12.500L4 16h4.500" fill="none" stroke="#fff" strokeWidth="1.600" />
            </svg>
          </Bin>
          <WinButton aria-label="Kis méret"><svg width="12" height="4" viewBox="0 0 12 4"><path d="M.5.5h11v3H.5z" fill="#fff" stroke="#444" /></svg></WinButton>
          <WinButton aria-label="Előző méret">
            <svg width="12" height="11" viewBox="0 0 12 11"><path d="M4.500 1.500h6v5h-6z" fill="none" stroke="#444" strokeWidth="3" /><path d="M4.500 1.500h6v5h-6z" fill="none" stroke="#fff" /><path d="M2 4h6v5H2z" fill="#667" stroke="#444" strokeWidth="3.500" /><path d="M2 4h6v5H2z" fill="#445" stroke="#fff" strokeWidth="1.800" /></svg>
          </WinButton>
          <WinButton $close aria-label="Bezárás"><svg width="12" height="10" viewBox="0 0 12 10"><path d="M2 1l8 8M10 1L2 9" stroke="#533" strokeWidth="4" /><path d="M2 1l8 8M10 1L2 9" stroke="#fff" strokeWidth="2.500" /></svg></WinButton>
        </WindowButtons>
      </TabStrip>

      <Middle>
        <Rail>
          {railIcons.map((icon, i) => (
            <RailButton key={railLabels[i]} aria-label={railLabels[i]}>{icon}</RailButton>
          ))}
        </Rail>
        <Column>
          <Toolbar>
            <ToolGroup>
              <ToolButton aria-label="Vissza"><svg width="15" height="12" viewBox="0 0 15 12"><path d="M0 6l7-6v4h8v4H7v4z" fill="#474c57" /></svg></ToolButton>
              <ToolButton aria-label="Előre"><svg width="15" height="12" viewBox="0 0 15 12"><path d="M15 6L8 0v4H0v4h8v4z" fill="#9da1ac" /></svg></ToolButton>
            </ToolGroup>
            <ToolButton aria-label="Jelszókezelő"><svg width="18" height="9" viewBox="0 0 18 9"><circle cx="4.500" cy="4.500" r="3" fill="none" stroke="#a0a4af" strokeWidth="2.500" /><path d="M8 4.500h10M12.500 5v3M15.500 5v3" stroke="#a0a4af" strokeWidth="2" /></svg></ToolButton>
            <ToolButton aria-label="Frissítés"><svg width="16" height="16" viewBox="0 0 16 16"><path d="M2.500 6A6 6 0 1 1 8 14H3" fill="none" stroke="#565a66" strokeWidth="2.800" /><path d="M7 8v6.500H1z" fill="#474c57" /></svg></ToolButton>
            <ToolButton aria-label="Kezdőlap"><svg width="16" height="14" viewBox="0 0 16 14"><path d="M8 0l3 3V1h2v4l3 3h-2v6h-4V9H6v5H2V8H0z" fill="#474c57" /></svg></ToolButton>
            <AddressBox>
              <PmaFavicon />
              <BareInput aria-label="Cím" defaultValue="http://127.0.0.1/phpmyadmin/index.php?token=0427cf39b1f324987f7fd2941346cab1" />
              <Triangle color="#4d5468" />
            </AddressBox>
            <SearchBox>
              <EngineButton aria-label="Keresőmotor">
                <svg width="17" height="17" viewBox="0 0 17 17">
                  <path d="M8 0h9v7H8z" fill="#d8261c" /><path d="M10 7h7v10H9z" fill="#1a9a3c" /><path d="M0 7h8v10H0z" fill="#fff" />
                  <circle cx="5" cy="4" r="4" fill="#2458c8" /><circle cx="5.500" cy="4" r="1.500" fill="#e8f0ff" />
                  <path d="M8 7l3 2-2 3-3-2z" fill="#fff" /><path d="M6 8.500l3 2" stroke="#2458c8" strokeWidth="2" />
                  <ellipse cx="5" cy="13.500" rx="4.500" ry="3" fill="#f2b21c" />
                </svg>
                <Triangle />
              </EngineButton>
              <BareInput aria-label="Keresés" placeholder="Keresés ezzel: Google" />
              <SearchGo aria-label="Keresés indítása"><svg width="13" height="13" viewBox="0 0 13 13"><circle cx="8" cy="5" r="3.500" fill="none" stroke="#e6e7ea" strokeWidth="2" /><path d="M5.500 7.500L1 12" stroke="#e6e7ea" strokeWidth="2.500" /></svg></SearchGo>
            </SearchBox>
          </Toolbar>

          <Page>
            <Sidebar>
              <Logo>php<span>MyAdmin</span></Logo>
              <NavButtons>
                <a href="#home" aria-label="Kezdőlap"><Pixels rows={art.home} /></a>
                <a href="#exit" aria-label="Kilépés"><Pixels rows={art.exit} /></a>
                <a href="#query" aria-label="Lekérdezés ablak"><Pixels rows={art.sqlWindow} /></a>
                <a href="#docs" aria-label="phpMyAdmin dokumentáció"><Pixels rows={art.help} /></a>
                <a href="#sqldocs" aria-label="Dokumentáció"><Pixels rows={art.sqlHelp} /></a>
              </NavButtons>
              <DbLabel htmlFor="db">Adatbázis</DbLabel>
              <Select id="db"><option>pelda (1)</option></Select>
              <DbName><a href="#pelda"><b>pelda</b></a> (1)</DbName>
              <TableLink href="#felhasznalok"><Pixels rows={art.smallTable} />felhasznalok</TableLink>
            </Sidebar>

            <Main>
              <Crumbs>
                <a href="#server"><Pixels rows={art.server} />Szerver: localhost</a>
                <CrumbArrow />
                <a href="#database"><Pixels rows={art.database} />Adatbázis: pelda</a>
                <CrumbArrow />
                <a href="#table"><Pixels rows={art.table} />Tábla: felhasznalok</a>
              </Crumbs>
              <Tabs>
                {pmaTabs.map((t) => (
                  <Tab key={t.label} href="#tab" $width={t.width} $active={t.active} $danger={t.danger}>{t.icon}{t.label}</Tab>
                ))}
              </Tabs>
              <Success><Check />Megjelenített sorok: 0 - 1 (2 összesen, a lekérdezés 0.0006 másodpercig tartott)</Success>
              <QueryBox>
                <Code>
                  <b>SELECT</b> <i>*</i>{"\n"}
                  <b>FROM</b> <q>`felhasznalok`</q>{"\n"}
                  <b>LIMIT</b> <span>0</span> <i>,</i> <span>30</span>
                </Code>
                <QueryTools>
                  <CheckLabel><Checkbox />Adatgyűjtés</CheckLabel>
                  <span>[ <a href="#edit">Szerkesztés</a> ]</span>
                  <span>[ <a href="#explain">SQL magyarázat</a> ]</span>
                  <span>[ <a href="#php">PHP kód készítése</a> ]</span>
                  <span>[ <a href="#refresh">Frissítés</a> ]</span>
                </QueryTools>
              </QueryBox>

              <DisplayOptions id="top" />
              <SortRow>
                <label htmlFor="sort">Kulcs szerinti rendezés:</label>
                <Select id="sort" $w="151px"><option>Nincs</option></Select>
              </SortRow>
              <div>+ <a href="#options">Beállítások</a></div>
              <Results>
                <colgroup>
                  {columnWidths.map((w, i) => <Col key={i} $w={w} />)}
                </colgroup>
                <thead>
                  <tr>
                    <th colSpan={3} />
                    <th><a href="#id">Azonosito</a></th>
                    <th><a href="#name">felhasznalonev</a></th>
                    <th><a href="#password">jelszo</a></th>
                    <th><a href="#email">emailcim</a></th>
                  </tr>
                </thead>
                <tbody>
                  {users.map((u) => (
                    <tr key={u.id}>
                      <td><Checkbox aria-label={`${u.name} kijelölése`} /></td>
                      <td><a href="#edit" aria-label="Szerkesztés"><Pencil /></a></td>
                      <td><a href="#delete" aria-label="Törlés"><Cross /></a></td>
                      <NumberCell>{u.id}</NumberCell>
                      <td>{u.name}</td>
                      <td>{u.password}</td>
                      <td>{u.email}</td>
                    </tr>
                  ))}
                </tbody>
              </Results>
              <SelectionRow>
                <WithSelected />
                <span>
                  <a href="#all">Mind kijelölése</a> / <a href="#none">Kijelölés törlése</a> <em>A kijelöltekkel végzendő művelet:</em>
                </span>
                <SelectionIcons>
                  <a href="#edit" aria-label="Módosítás"><Pencil /></a>
                  <a href="#delete" aria-label="Törlés"><Cross /></a>
                  <a href="#export" aria-label="Exportálás"><Pixels rows={art.export} /></a>
                </SelectionIcons>
              </SelectionRow>
              <DisplayOptions id="bottom" />

              <Group>
                <Legend>Műveletek a lekérdezési eredménnyel</Legend>
                <GroupRow>
                  <IconLink href="#print"><Printer />Nyomtatási nézet</IconLink>
                  <IconLink href="#printfull"><Printer />Nyomtatási nézet (teljes szöveggel)</IconLink>
                  <IconLink href="#export"><Pixels rows={art.export} />Exportálás</IconLink>
                  <IconLink href="#view"><Pixels rows={art.view} />CREATE VIEW</IconLink>
                </GroupRow>
              </Group>

              <Group $open>
                <Legend><Pixels rows={art.bookmark} />Az SQL-lekérdezés hozzáadása a könyvjelzőkhöz</Legend>
                <GroupRow $tall>
                  <NameLabel>Név:<TextBox $w={158} /></NameLabel>
                  <CheckLabel $gap={7}><Checkbox />A hozzáférés ehhez a könyvjelzőhöz az összes felhasználó számára engedélyezett</CheckLabel>
                </GroupRow>
              </Group>
              <GroupFooter><Button>Az SQL-lekérdezés hozzáadása a könyvjelzőkhöz</Button></GroupFooter>

              <PageFooter>
                <a href="#new"><NewWindow />Új phpMyAdmin ablak nyitása</a>
              </PageFooter>
            </Main>
          </Page>
        </Column>
      </Middle>

      <StatusBar>
        <StatusPanel>
          <StatusButton aria-label="Panelek">
            <svg width="17" height="14" viewBox="0 0 17 14"><path d="M1 1h15v12H1z" fill="#f4f5fa" stroke="#353b50" strokeWidth="1.500" /><path d="M1 1h5v12H1z" fill="#353b50" /><path d="M12 4v6L8.500 7z" fill="#222" /></svg>
          </StatusButton>
          <StatusGroup>
            <StatusButton aria-label="Szinkronizálás">
              <svg width="15" height="12" viewBox="0 0 15 12"><path d="M2 7a5 5 0 0 1 8-4M13 5a5 5 0 0 1-8 4" fill="none" stroke="#3c4254" strokeWidth="2.500" /><path d="M0 5.500h6L3 9zM9 6.500h6L12 3z" fill="#3c4254" /></svg>
              <Triangle width={7} />
            </StatusButton>
            <StatusButton aria-label="Opera Unite">
              <svg width="13" height="13" viewBox="0 0 19 19"><path d={fanPath} fill="#2f3340" /></svg>
              <Triangle width={7} />
            </StatusButton>
            <StatusButton aria-label="Opera Turbo">
              <svg width="13" height="13" viewBox="0 0 13 13"><circle cx="6.500" cy="6.500" r="6.500" fill="#353b50" /><path d="M3 8a4 4 0 1 1 7 0M7 8L4.500 4.500" fill="none" stroke="#e4e8f2" strokeWidth="1" /></svg>
            </StatusButton>
            <Triangle width={7} />
          </StatusGroup>
        </StatusPanel>
        <StatusPanel $end>
          <StatusButton>
            <svg width="15" height="15" viewBox="0 0 15 15"><circle cx="6" cy="6" r="4.800" fill="#eef1f8" stroke="#353b50" strokeWidth="1.600" /><path d="M3.500 6h5M6 3.500v5" stroke="#353b50" strokeWidth="1.500" /><path d="M9.500 9.500L14 14" stroke="#353b50" strokeWidth="2.500" /></svg>
            Megjelenés (100%)
            <Triangle width={7} />
          </StatusButton>
        </StatusPanel>
      </StatusBar>
    </Window>
  );
}
